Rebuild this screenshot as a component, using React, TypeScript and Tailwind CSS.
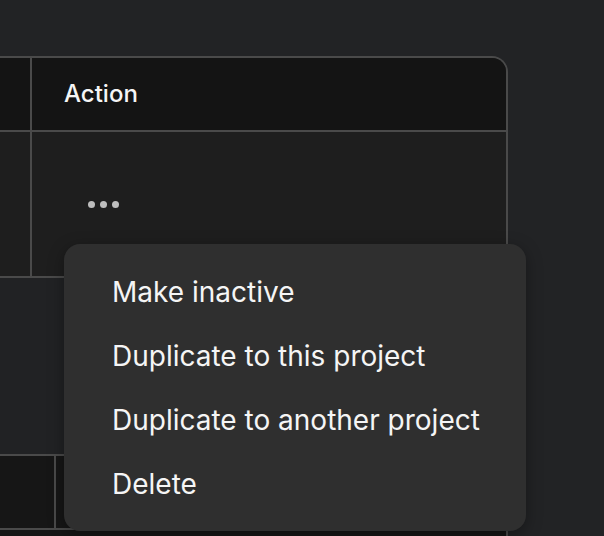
const menuItems = [
  'Make inactive',
  'Duplicate to this project',
  'Duplicate to another project',
  'Delete',
];

function Dots() {
  return (
    <button
      type="button"
      className="ml-[24px] flex items-center gap-[5px] border-0 bg-transparent p-0"
      aria-label="More actions"
    >
      <span className="h-[7px] w-[7px] rounded-full bg-[#bdbdbd]" />
      <span className="h-[7px] w-[7px] rounded-full bg-[#bdbdbd]" />
      <span className="h-[7px] w-[7px] rounded-full bg-[#bdbdbd]" />
    </button>
  );
}

export default function App() {
  return (
    <div
      className="relative h-[536px] w-[604px] overflow-hidden bg-[#222325] pt-[56px] text-[#f5f5f5]"
      style={{ fontFamily: 'Inter, "Noto Sans", sans-serif' }}
    >
      <div className="ml-[-169px] w-[677px] overflow-hidden rounded-tr-2xl border-t-2 border-r-2 border-[#4a4a4a]">
        <div className="grid h-[74px] grid-cols-[201px_1fr] border-b-2 border-[#4a4a4a] bg-[#141414]">
          <div className="border-r-2 border-[#4a4a4a]" />
          <div className="flex items-center pl-[32px] text-[24px] font-medium leading-none">
            Action
          </div>
        </div>
        <div className="grid h-[146px] grid-cols-[201px_1fr] border-b-2 border-[#4a4a4a] bg-[#1e1e1e]">
          <div className="border-r-2 border-[#4a4a4a]" />
          <div className="flex items-center pl-[32px]">
            <Dots />
          </div>
        </div>
        <div className="h-[178px] border-b-2 border-[#4a4a4a] bg-[#212224]" />
        <div className="grid h-[74px] grid-cols-[225px_1fr] border-b-2 border-[#4a4a4a] bg-[#161616]">
          <div className="border-r-2 border-[#4a4a4a]" />
          <div />
        </div>
        <div className="h-[40px] bg-[#161616]" />
      </div>

      <ul className="absolute left-[64px] top-[244px] m-0 w-[462px] list-none rounded-2xl bg-[#2f2f2f] px-0 pb-[15px] pt-[16px] shadow-[0_4px_16px_rgba(0,0,0,0.35)]">
        {menuItems.map((item) => (
          <li key={item}>
            <button
              type="button"
              className="flex h-[64px] w-full items-center border-0 bg-transparent pl-[48px] text-left text-[28px] leading-none text-[#f5f5f5]"
            >
              {item}
            </button>
          </li>
        ))}
      </ul>
    </div>
  );
}
